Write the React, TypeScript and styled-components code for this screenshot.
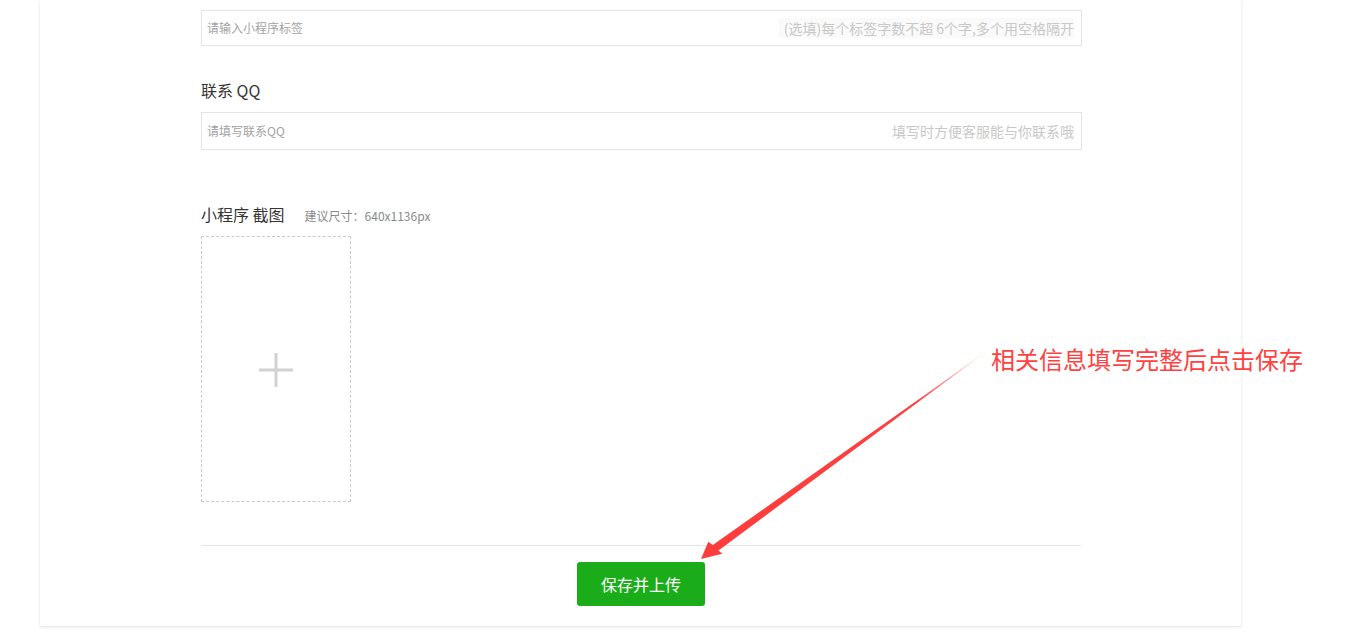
import React from "react";
import styled, { createGlobalStyle } from "styled-components";

const Global = createGlobalStyle`
  html, body { margin: 0; padding: 0; background: #fff; }
  body { font-family: "Noto Sans CJK SC", "Noto Sans", "Liberation Sans", sans-serif; color: #333; }
  * { box-sizing: border-box; }
`;

const Page = styled.div`
  padding-left: 40px;
  height: 634px;
  overflow: hidden;
`;

const Card = styled.div`
  position: relative;
  width: 1201px;
  background: #fff;
  box-shadow: 0 1px 3px rgba(0, 0, 0, 0.12);
  padding: 10px 159px 20px 161px;
`;

const Field = styled.div<{ $h: number }>`
  display: flex;
  align-items: center;
  justify-content: space-between;
  height: ${(p) => p.$h}px;
  border: 1px solid #e4e4e4;
  padding: 0 7px 0 5px;
  background: #fff;
`;

const Placeholder = styled.span`
  font-size: 12px;
  color: #a3a3a3;
  line-height: 20px;
`;

const Hint = styled.span<{ $shaded?: boolean }>`
  font-size: 14px;
  line-height: 20px;
  color: #c8c8c8;
  padding-left: 5px;
  background: ${(p) => (p.$shaded ? "#fafafa" : "transparent")};
`;

const Label = styled.div<{ $top: number; $bottom: number }>`
  display: flex;
  align-items: baseline;
  gap: 20px;
  height: 24px;
  margin-top: ${(p) => p.$top}px;
  margin-bottom: ${(p) => p.$bottom}px;
  font-size: 16px;
  line-height: 24px;
  color: #353535;
`;

const SubHint = styled.span`
  font-size: 12px;
  line-height: 16px;
  color: #8a8a8a;
`;

const Upload = styled.div`
  width: 150px;
  height: 266px;
  border: 1px dashed #c9c9c9;
  display: flex;
  align-items: center;
  justify-content: center;
  padding-top: 1px;
`;

const Divider = styled.div`
  margin-top: 43px;
  height: 1px;
  width: 880px;
  background: #e5e5e5;
`;

const Actions = styled.div`
  display: flex;
  justify-content: center;
  padding-top: 16px;
  width: 880px;
`;

const PrimaryButton = styled.button`
  width: 128px;
  height: 44px;
  border: none;
  border-radius: 3px;
  background: #1aad19;
  color: #fff;
  font-family: inherit;
  font-size: 16px;
  font-weight: 400;
  cursor: pointer;
`;

const Note = styled.div`
  position: absolute;
  left: 951px;
  top: 347px;
  font-size: 24px;
  line-height: 24px;
  color: #ff4141;
  white-space: nowrap;
`;

const ArrowSvg = styled.svg`
  position: absolute;
  left: 650px;
  top: 340px;
  pointer-events: none;
`;

const Plus = () => (
  <svg width="36" height="36" viewBox="0 0 36 36">
    <rect x="1" y="16.5" width="34" height="3" fill="#d2d2d2" />
    <rect x="16.5" y="1" width="3" height="34" fill="#d2d2d2" />
  </svg>
);

const Arrow = () => (
  <ArrowSvg width="310" height="230" viewBox="0 0 310 230">
    <defs>
      <linearGradient id="ag" x1="297" y1="11" x2="11" y2="219" gradientUnits="userSpaceOnUse">
        <stop offset="0" stopColor="#ff4040" stopOpacity="0.15" />
        <stop offset="0.25" stopColor="#ff4040" stopOpacity="1" />
        <stop offset="1" stopColor="#ff3c3c" stopOpacity="1" />
      </linearGradient>
    </defs>
    <polygon
      points="297,11 28.5,210.5 32.3,213.8 11,219 18.3,201.7 22.8,205"
      fill="url(#ag)"
    />
  </ArrowSvg>
);

export default function App() {
  return (
    <>
      <Global />
      <Page>
        <Card>
          <Field $h={36}>
            <Placeholder>请输入小程序标签</Placeholder>
            <Hint $shaded>(选填)每个标签字数不超 6个字,多个用空格隔开</Hint>
          </Field>

          <Label $top={32} $bottom={10}>联系 QQ</Label>
          <Field $h={38}>
            <Placeholder>请填写联系QQ</Placeholder>
            <Hint>填写时方便客服能与你联系哦</Hint>
          </Field>

          <Label $top={52} $bottom={10}>
            小程序 截图
            <SubHint>建议尺寸：640x1136px</SubHint>
          </Label>
          <Upload>
            <Plus />
          </Upload>

          <Divider />
          <Actions>
            <PrimaryButton>保存并上传</PrimaryButton>
          </Actions>

          <Note>相关信息填写完整后点击保存</Note>
          <Arrow />
        </Card>
      </Page>
    </>
  );
}
